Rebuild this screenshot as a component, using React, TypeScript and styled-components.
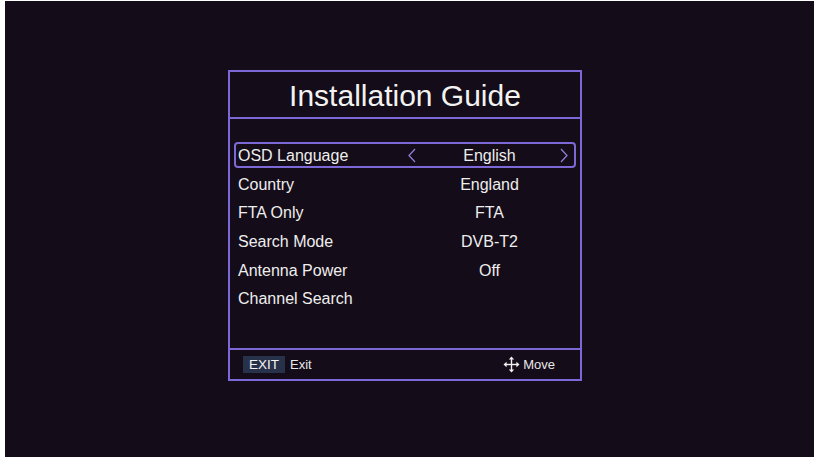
import React from "react";
import styled, {createGlobalStyle} from "styled-components";

const GlobalStyle = createGlobalStyle`
	html, body {
		margin: 0;
		padding: 0;
		background: #ffffff;
	}
	body {
		font-family: "Liberation Sans", Arial, sans-serif;
	}
`;

const Screen = styled.div`
	margin: 1px 0 0 5px;
	width: 809px;
	height: 456px;
	background: #140c18;
	box-sizing: border-box;
	padding: 69px 0 0 223px;
`;

const Panel = styled.div`
	width: 354px;
	border: 2px solid #7c68d6;
	box-sizing: border-box;
	display: flex;
	flex-direction: column;
	background: #140c18;
`;

const Header = styled.div`
	height: 47px;
	border-bottom: 2px solid #7c68d6;
	display: flex;
	align-items: center;
	justify-content: center;
	color: #f2f2f2;
	font-size: 30px;
	padding-top: 3px;
	box-sizing: border-box;
`;

const Body = styled.div`
	height: 231px;
	padding: 23px 4px 0;
	box-sizing: border-box;
	border-bottom: 2px solid #7c68d6;
`;

const Row = styled.div<{ $active?: boolean }>`
	height: 26px;
	margin-bottom: 2.7px;
	padding-top: 2px;
	display: grid;
	grid-template-columns: 1fr 174px;
	align-items: center;
	border: 2px solid ${p => p.$active ? "#7c68d6" : "transparent"};
	border-radius: 4px;
	box-sizing: border-box;
	color: #eeeeee;
	font-size: 16px;
`;

const Label = styled.span`
	padding-left: 2px;
	white-space: nowrap;
`;

const ValueBox = styled.div`
	display: flex;
	align-items: center;
	justify-content: space-between;
	padding: 0 6px 0 8px;
`;

const ArrowSlot = styled.span<{ $hidden?: boolean }>`
	display: flex;
	width: 8px;
	justify-content: center;
	margin-top: -2px;
	visibility: ${p => p.$hidden ? "hidden" : "visible"};
`;

const Value = styled.span`
	flex: 1;
	text-align: center;
	padding-left: 3px;
`;

const Footer = styled.div`
	height: 29px;
	display: flex;
	align-items: center;
	padding: 0 25px 0 13px;
	color: #e8e8e8;
	font-size: 13px;
`;

const KeyBadge = styled.span`
	background: #27324a;
	color: #f4f4f4;
	font-size: 13.5px;
	padding: 0 6px;
	height: 17px;
	line-height: 17px;
	margin-right: 5px;
`;

const Spacer = styled.div`
	flex: 1;
`;

const MoveHint = styled.div`
	display: flex;
	align-items: center;
	gap: 3px;
`;

const Chevron = ({dir}: { dir: "left" | "right" }) => (
	<svg width="8" height="15" viewBox="0 0 8 15">
		<polyline
			points={dir === "left" ? "7,1 1,7.5 7,14" : "1,1 7,7.5 1,14"}
			fill="none"
			stroke="#8b7ed6"
			strokeWidth="1.3"
		/>
	</svg>
);

const MoveIcon = () => (
	<svg width="17" height="17" viewBox="0 0 17 17">
		<g stroke="#f0f0f0" strokeWidth="1.4" fill="none">
			<line x1="8.5" y1="3" x2="8.5" y2="14"/>
			<line x1="3" y1="8.5" x2="14" y2="8.5"/>
		</g>
		<g fill="#f0f0f0">
			<polygon points="8.5,0.5 5.8,3.6 11.2,3.6"/>
			<polygon points="8.5,16.5 5.8,13.4 11.2,13.4"/>
			<polygon points="0.5,8.5 3.6,5.8 3.6,11.2"/>
			<polygon points="16.5,8.5 13.4,5.8 13.4,11.2"/>
		</g>
	</svg>
);

const ROWS = [
	{label: "OSD Language", value: "English", active: true},
	{label: "Country", value: "England"},
	{label: "FTA Only", value: "FTA"},
	{label: "Search Mode", value: "DVB-T2"},
	{label: "Antenna Power", value: "Off"},
	{label: "Channel Search", value: ""},
];

export default function App() {
	return (
		<>
			<GlobalStyle/>
			<Screen>
				<Panel>
					<Header>Installation Guide</Header>
					<Body>
						{ROWS.map(r => (
							<Row key={r.label} $active={r.active}>
								<Label>{r.label}</Label>
								<ValueBox>
									<ArrowSlot $hidden={!r.active}><Chevron dir="left"/></ArrowSlot>
									<Value>{r.value}</Value>
									<ArrowSlot $hidden={!r.active}><Chevron dir="right"/></ArrowSlot>
								</ValueBox>
							</Row>
						))}
					</Body>
					<Footer>
						<KeyBadge>EXIT</KeyBadge>
						<span>Exit</span>
						<Spacer/>
						<MoveHint>
							<MoveIcon/>
							<span>Move</span>
						</MoveHint>
					</Footer>
				</Panel>
			</Screen>
		</>
	);
}
